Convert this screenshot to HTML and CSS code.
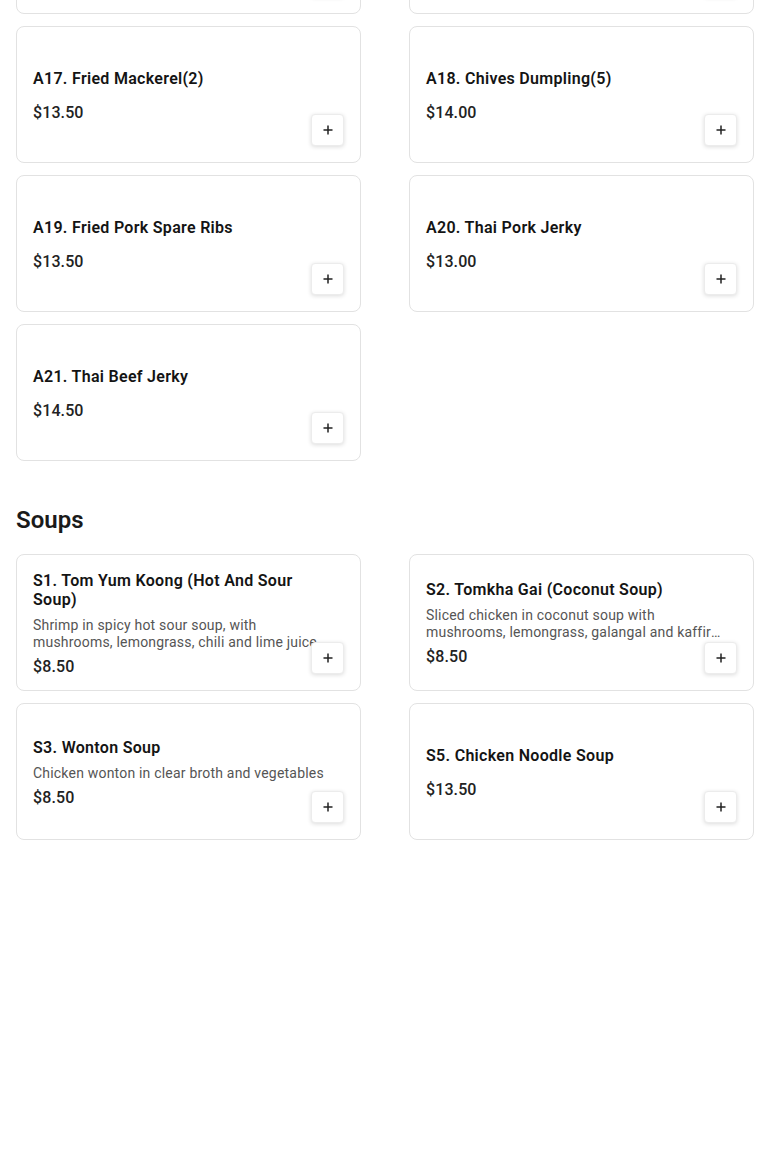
FILE: index.html
```html
<!DOCTYPE html>
<html lang="en">
<head>
<meta charset="utf-8">
<title>Menu</title>
<link rel="stylesheet" href="styles.css">
</head>
<body>
<main class="menu">
  <section class="category">
    <div class="grid">
      <div class="card"><div class="info"><h3 class="name">A15. Fried Tofu</h3><div class="price">$12.50</div></div><button class="add" aria-label="Add"><svg viewBox="0 0 12 12" width="12" height="12"><path d="M6 1.5v9M1.5 6h9" stroke="#222" stroke-width="1.5" fill="none"/></svg></button></div>
      <div class="card"><div class="info"><h3 class="name">A16. Fish Cake</h3><div class="price">$13.50</div></div><button class="add" aria-label="Add"><svg viewBox="0 0 12 12" width="12" height="12"><path d="M6 1.5v9M1.5 6h9" stroke="#222" stroke-width="1.5" fill="none"/></svg></button></div>
      <div class="card"><div class="info"><h3 class="name">A17. Fried Mackerel(2)</h3><div class="price">$13.50</div></div><button class="add" aria-label="Add"><svg viewBox="0 0 12 12" width="12" height="12"><path d="M6 1.5v9M1.5 6h9" stroke="#222" stroke-width="1.5" fill="none"/></svg></button></div>
      <div class="card"><div class="info"><h3 class="name">A18. Chives Dumpling(5)</h3><div class="price">$14.00</div></div><button class="add" aria-label="Add"><svg viewBox="0 0 12 12" width="12" height="12"><path d="M6 1.5v9M1.5 6h9" stroke="#222" stroke-width="1.5" fill="none"/></svg></button></div>
      <div class="card"><div class="info"><h3 class="name">A19. Fried Pork Spare Ribs</h3><div class="price">$13.50</div></div><button class="add" aria-label="Add"><svg viewBox="0 0 12 12" width="12" height="12"><path d="M6 1.5v9M1.5 6h9" stroke="#222" stroke-width="1.5" fill="none"/></svg></button></div>
      <div class="card"><div class="info"><h3 class="name">A20. Thai Pork Jerky</h3><div class="price">$13.00</div></div><button class="add" aria-label="Add"><svg viewBox="0 0 12 12" width="12" height="12"><path d="M6 1.5v9M1.5 6h9" stroke="#222" stroke-width="1.5" fill="none"/></svg></button></div>
      <div class="card"><div class="info"><h3 class="name">A21. Thai Beef Jerky</h3><div class="price">$14.50</div></div><button class="add" aria-label="Add"><svg viewBox="0 0 12 12" width="12" height="12"><path d="M6 1.5v9M1.5 6h9" stroke="#222" stroke-width="1.5" fill="none"/></svg></button></div>
    </div>
  </section>
  <section class="category">
    <h2 class="cat-title">Soups</h2>
    <div class="grid">
      <div class="card"><div class="info"><h3 class="name">S1. Tom Yum Koong (Hot And Sour Soup)</h3><p class="desc">Shrimp in spicy hot sour soup, with mushrooms, lemongrass, chili and lime juice</p><div class="price">$8.50</div></div><button class="add" aria-label="Add"><svg viewBox="0 0 12 12" width="12" height="12"><path d="M6 1.5v9M1.5 6h9" stroke="#222" stroke-width="1.5" fill="none"/></svg></button></div>
      <div class="card"><div class="info"><h3 class="name">S2. Tomkha Gai (Coconut Soup)</h3><p class="desc">Sliced chicken in coconut soup with mushrooms, lemongrass, galangal and kaffir lime leaves</p><div class="price">$8.50</div></div><button class="add" aria-label="Add"><svg viewBox="0 0 12 12" width="12" height="12"><path d="M6 1.5v9M1.5 6h9" stroke="#222" stroke-width="1.5" fill="none"/></svg></button></div>
      <div class="card"><div class="info"><h3 class="name">S3. Wonton Soup</h3><p class="desc">Chicken wonton in clear broth and vegetables</p><div class="price">$8.50</div></div><button class="add" aria-label="Add"><svg viewBox="0 0 12 12" width="12" height="12"><path d="M6 1.5v9M1.5 6h9" stroke="#222" stroke-width="1.5" fill="none"/></svg></button></div>
      <div class="card"><div class="info"><h3 class="name">S5. Chicken Noodle Soup</h3><div class="price">$13.50</div></div><button class="add" aria-label="Add"><svg viewBox="0 0 12 12" width="12" height="12"><path d="M6 1.5v9M1.5 6h9" stroke="#222" stroke-width="1.5" fill="none"/></svg></button></div>
    </div>
  </section>
</main>
</body>
</html>
```

FILE: styles.css
```css
html, body {
  margin: 0;
  padding: 0;
  background: #fff;
  overflow: hidden;
}
body {
  font-family: Roboto, "Liberation Sans", Arial, sans-serif;
  color: #1f1f1f;
}
.menu {
  padding: 0 16px;
  margin-top: -123px;
}
.grid {
  display: grid;
  grid-template-columns: 1fr 1fr;
  column-gap: 48px;
  row-gap: 12px;
}
.cat-title {
  margin: 41px 0 16px;
  font-size: 24px;
  line-height: 36px;
  font-weight: 600;
  color: #1a1a1a;
}
.card {
  position: relative;
  box-sizing: border-box;
  height: 137px;
  border: 1px solid #e2e2e2;
  border-radius: 8px;
  background: #fff;
  padding: 18px 16px 14px;
  display: flex;
  flex-direction: column;
  justify-content: center;
}
.info {
  display: flex;
  flex-direction: column;
  padding-right: 16px;
}
.name {
  margin: 0 0 13px;
  font-size: 16px;
  line-height: 19px;
  font-weight: 600;
  letter-spacing: 0.3px;
  color: #141414;
}
.desc {
  margin: -5px 0 4px;
  font-size: 14px;
  line-height: 17px;
  letter-spacing: 0.2px;
  color: #555;
  display: -webkit-box;
  -webkit-line-clamp: 2;
  -webkit-box-orient: vertical;
  overflow: hidden;
  text-overflow: ellipsis;
}
.price {
  font-size: 16px;
  line-height: 24px;
  font-weight: 500;
  letter-spacing: 0.1px;
  color: #222;
}
.add {
  position: absolute;
  right: 16px;
  bottom: 16px;
  width: 33px;
  height: 32px;
  padding: 0;
  border: 1px solid #ececec;
  border-radius: 4px;
  background: #fff;
  box-shadow: 0 1px 4px rgba(0, 0, 0, 0.14);
  display: flex;
  align-items: center;
  justify-content: center;
  cursor: pointer;
}
.add svg {
  display: block;
}
```
